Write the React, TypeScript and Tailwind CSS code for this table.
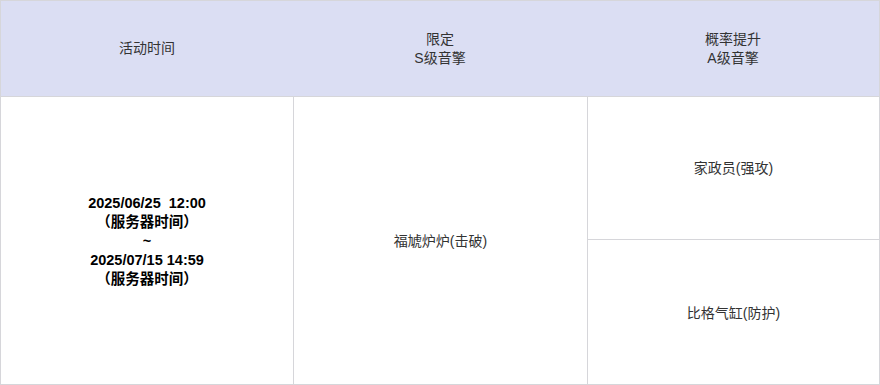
import React from 'react';

const font = { fontFamily: '"Liberation Sans", "Noto Sans CJK SC", sans-serif' };

export default function App() {
  return (
    <div className="w-[880px] h-[385px] bg-white text-[14px] text-[#333]" style={font}>
      <div className="h-full border border-[#d6d6da] flex flex-col">
        {/* Header row */}
        <div className="h-[96px] bg-[#dbdef3] grid grid-cols-[292px_294px_1fr] border-b border-[#d6d6da] leading-[19px]">
          <div className="flex items-center justify-center">活动时间</div>
          <div className="flex flex-col items-center justify-center">
            <span>限定</span>
            <span>S级音擎</span>
          </div>
          <div className="flex flex-col items-center justify-center">
            <span>概率提升</span>
            <span>A级音擎</span>
          </div>
        </div>

        {/* Body */}
        <div className="flex-1 grid grid-cols-[293px_294px_1fr]">
          <div className="flex flex-col items-center justify-center border-r border-[#d6d6da] font-bold text-black leading-[19px] pt-[2px] text-[14.5px]">
            <span className="whitespace-pre">2025/06/25  12:00</span>
            <span>（服务器时间）</span>
            <span>~</span>
            <span>2025/07/15 14:59</span>
            <span>（服务器时间）</span>
          </div>
          <div className="flex items-center justify-center border-r border-[#d6d6da] pt-[2px]">
            福虓炉炉(击破)
          </div>
          <div className="flex flex-col">
            <div className="h-[143px] flex items-center justify-center border-b border-[#d6d6da]">
              家政员(强攻)
            </div>
            <div className="flex-1 flex items-center justify-center pt-[2px]">
              比格气缸(防护)
            </div>
          </div>
        </div>
      </div>
    </div>
  );
}
